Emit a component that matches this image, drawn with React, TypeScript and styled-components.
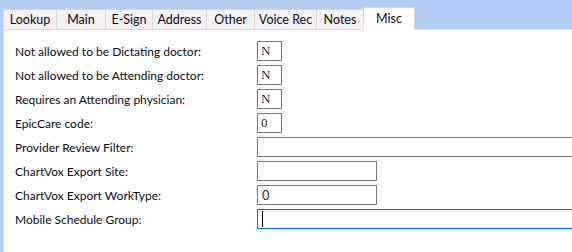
import React from "react";
import styled, { createGlobalStyle } from "styled-components";

const Global = createGlobalStyle`
  html, body { margin: 0; padding: 0; background: #b5cdf3; }
  #root { width: 572px; height: 252px; }
`;

const Window = styled.div`
  width: 572px;
  height: 252px;
  overflow: hidden;
  background: #b5cdf3;
  display: flex;
  flex-direction: column;
  font-family: Lato, "Noto Sans", sans-serif;
  font-size: 12px;
  color: #0d0d1a;
`;

const TabStrip = styled.div`
  display: flex;
  align-items: flex-end;
  height: 29px;
  padding-left: 3px;
  flex-shrink: 0;
`;

const Tab = styled.div<{ $w: number; $active?: boolean }>`
  box-sizing: border-box;
  width: ${(p) => p.$w}px;
  height: ${(p) => (p.$active ? 23 : 21)}px;
  margin-left: -1px;
  display: flex;
  align-items: ${(p) => (p.$active ? "flex-start" : "center")};
  justify-content: center;
  padding-top: ${(p) => (p.$active ? 3 : 0)}px;
  background: ${(p) => (p.$active ? "#ffffff" : "#f4f0f4")};
  border: 1px solid #d9d9d9;
  border-bottom: ${(p) => (p.$active ? "1px solid #ffffff" : "1px solid #d9d9d9")};
  position: relative;
  z-index: ${(p) => (p.$active ? 2 : 1)};
  margin-bottom: -1px;
  white-space: nowrap;
  font-size: 12.5px;
  &:first-child { margin-left: 0; }
`;

const Panel = styled.div`
  flex: 1;
  margin-left: 3px;
  background: #ffffff;
  border-left: 1px solid #d9d9d9;
  border-top: 1px solid #d9d9d9;
  padding: 11px 0 0 11px;
  display: grid;
  grid-template-columns: 242px 1fr;
  grid-auto-rows: 20px;
  row-gap: 4px;
  align-content: start;
`;

const Label = styled.div`
  display: flex;
  align-items: center;
  white-space: nowrap;
`;

const Field = styled.div<{ $w: number; $focus?: boolean; $mono?: boolean }>`
  box-sizing: border-box;
  width: ${(p) => p.$w}px;
  height: 20px;
  border: 1px solid ${(p) => (p.$focus ? "#0078d7" : "#7a7a7a")};
  background: #fff;
  display: flex;
  align-items: center;
  padding-left: ${(p) => (p.$mono ? 3 : 4)}px;
  font-family: ${(p) =>
    p.$mono ? '"Liberation Serif", "Times New Roman", serif' : 'Lato, "Noto Sans", sans-serif'};
  font-size: ${(p) => (p.$mono ? 13 : 12.5)}px;
  font-weight: 400;
  color: #1a2a4a;
`;

const Caret = styled.span`
  display: inline-block;
  width: 1px;
  height: 16px;
  background: #000;
`;

const tabs = [
  { name: "Lookup", w: 54 },
  { name: "Main", w: 50 },
  { name: "E-Sign", w: 48 },
  { name: "Address", w: 55 },
  { name: "Other", w: 49 },
  { name: "Voice Rec", w: 63 },
  { name: "Notes", w: 48 },
  { name: "Misc", w: 52, active: true },
];

type Row = { label: string; w: number; value?: string; mono?: boolean; focus?: boolean };

const rows: Row[] = [
  { label: "Not allowed to be Dictating doctor:", w: 25, value: "N", mono: true },
  { label: "Not allowed to be Attending doctor:", w: 25, value: "N", mono: true },
  { label: "Requires an Attending physician:", w: 25, value: "N", mono: true },
  { label: "EpicCare code:", w: 25, value: "0", mono: true },
  { label: "Provider Review Filter:", w: 330 },
  { label: "ChartVox Export Site:", w: 120 },
  { label: "ChartVox Export WorkType:", w: 120, value: "0" },
  { label: "Mobile Schedule Group:", w: 330, focus: true },
];

export default function App() {
  return (
    <>
      <Global />
      <Window>
        <TabStrip>
          {tabs.map((t) => (
            <Tab key={t.name} $w={t.w} $active={t.active}>
              {t.name}
            </Tab>
          ))}
        </TabStrip>
        <Panel>
          {rows.map((r) => (
            <React.Fragment key={r.label}>
              <Label>{r.label}</Label>
              <Field $w={r.w} $mono={r.mono} $focus={r.focus}>
                {r.focus ? <Caret /> : r.value}
              </Field>
            </React.Fragment>
          ))}
        </Panel>
      </Window>
    </>
  );
}
